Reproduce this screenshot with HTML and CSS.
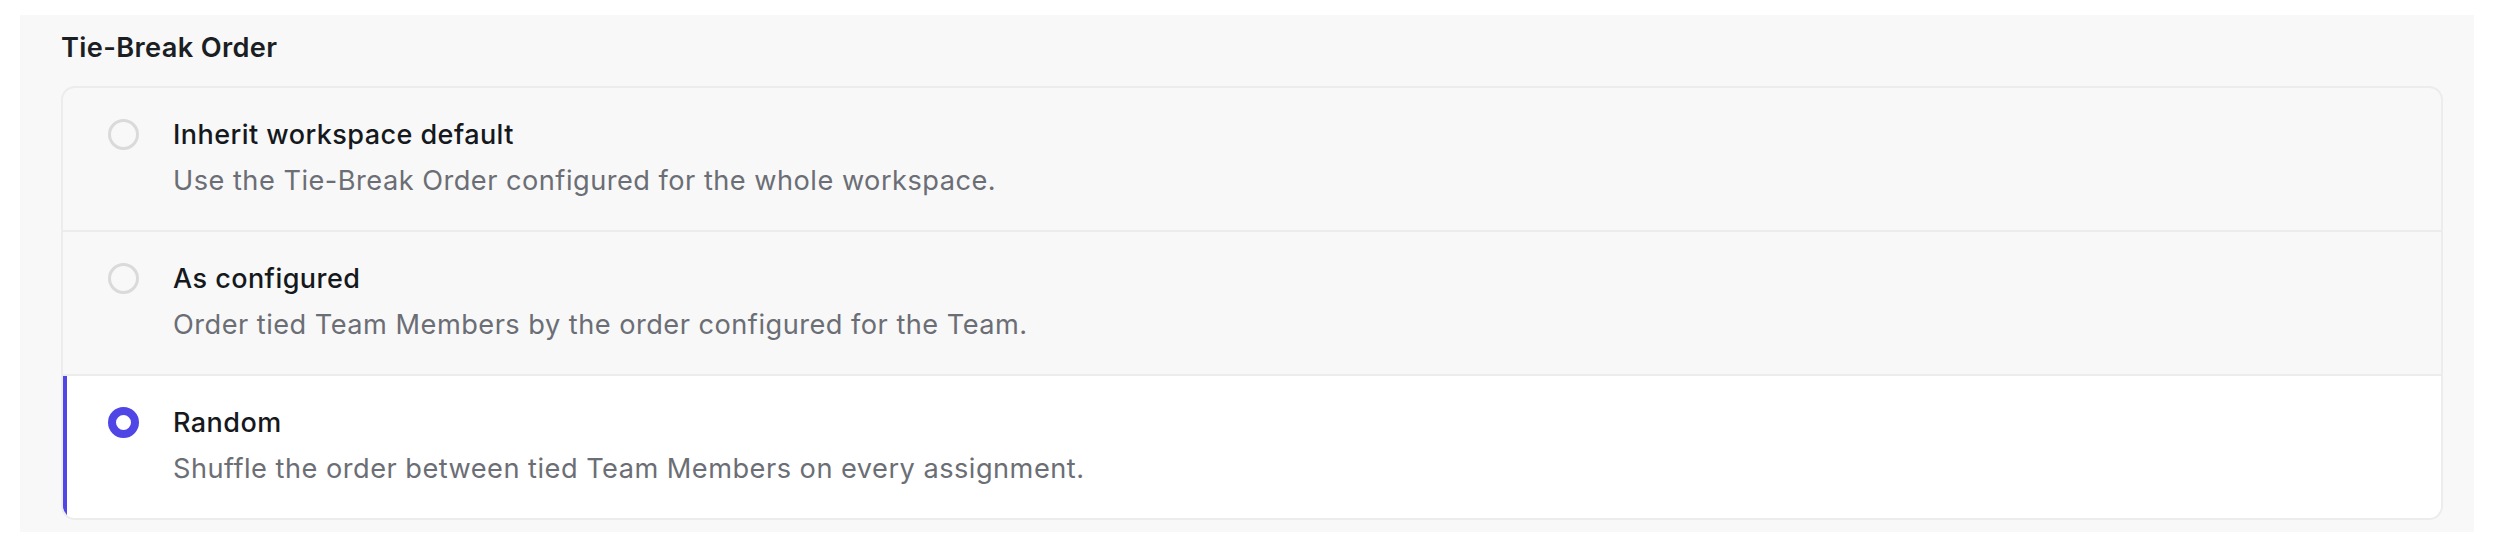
FILE: index.html
```html
<!DOCTYPE html>
<html lang="en">
<head>
<meta charset="utf-8">
<title>Tie-Break Order</title>
<link rel="stylesheet" href="styles.css">
</head>
<body>
<section class="panel">
  <h2 class="title">Tie-Break Order</h2>
  <div class="options" role="radiogroup">
    <label class="option">
      <span class="radio"></span>
      <span class="text">
        <span class="label">Inherit workspace default</span>
        <span class="desc">Use the Tie-Break Order configured for the whole workspace.</span>
      </span>
    </label>
    <label class="option">
      <span class="radio"></span>
      <span class="text">
        <span class="label">As configured</span>
        <span class="desc">Order tied Team Members by the order configured for the Team.</span>
      </span>
    </label>
    <label class="option option-selected">
      <span class="radio radio-checked"></span>
      <span class="text">
        <span class="label">Random</span>
        <span class="desc">Shuffle the order between tied Team Members on every assignment.</span>
      </span>
    </label>
  </div>
</section>
</body>
</html>
```

FILE: styles.css
```css
html, body {
  margin: 0;
  padding: 0;
  background: #ffffff;
}

body {
  padding: 15px 20px;
  font-family: Inter, "Noto Sans", "Liberation Sans", sans-serif;
}

.panel {
  background: #f8f8f8;
  padding: 11px 31px 12px 41px;
}

.title {
  margin: 0 0 17px 0;
  font-size: 27.2px;
  line-height: 43px;
  font-weight: 600;
  letter-spacing: 0.35px;
  color: #1b1e23;
}

.options {
  display: flex;
  flex-direction: column;
  border: 2px solid #ececec;
  border-radius: 14px;
  overflow: hidden;
}

.option {
  display: flex;
  align-items: flex-start;
  gap: 34px;
  padding: 29px 40px 31px 45px;
  border-bottom: 2px solid #ececec;
  cursor: pointer;
}

.option:last-child {
  border-bottom: none;
}

.option-selected {
  background: #ffffff;
  box-shadow: inset 4px 0 0 #4f46e5;
}

.radio {
  flex: none;
  box-sizing: border-box;
  width: 31px;
  height: 31px;
  margin-top: 2px;
  border: 3px solid #dadada;
  border-radius: 50%;
}

.radio-checked {
  border: 8px solid #4f46e5;
  background: #ffffff;
}

.text {
  display: flex;
  flex-direction: column;
}

.label {
  font-size: 27px;
  line-height: 36px;
  font-weight: 500;
  letter-spacing: 0.45px;
  color: #15181c;
}

.desc {
  margin-top: 10px;
  font-size: 27.2px;
  line-height: 36px;
  font-weight: 400;
  letter-spacing: 0.48px;
  color: #6b6e75;
}
```
